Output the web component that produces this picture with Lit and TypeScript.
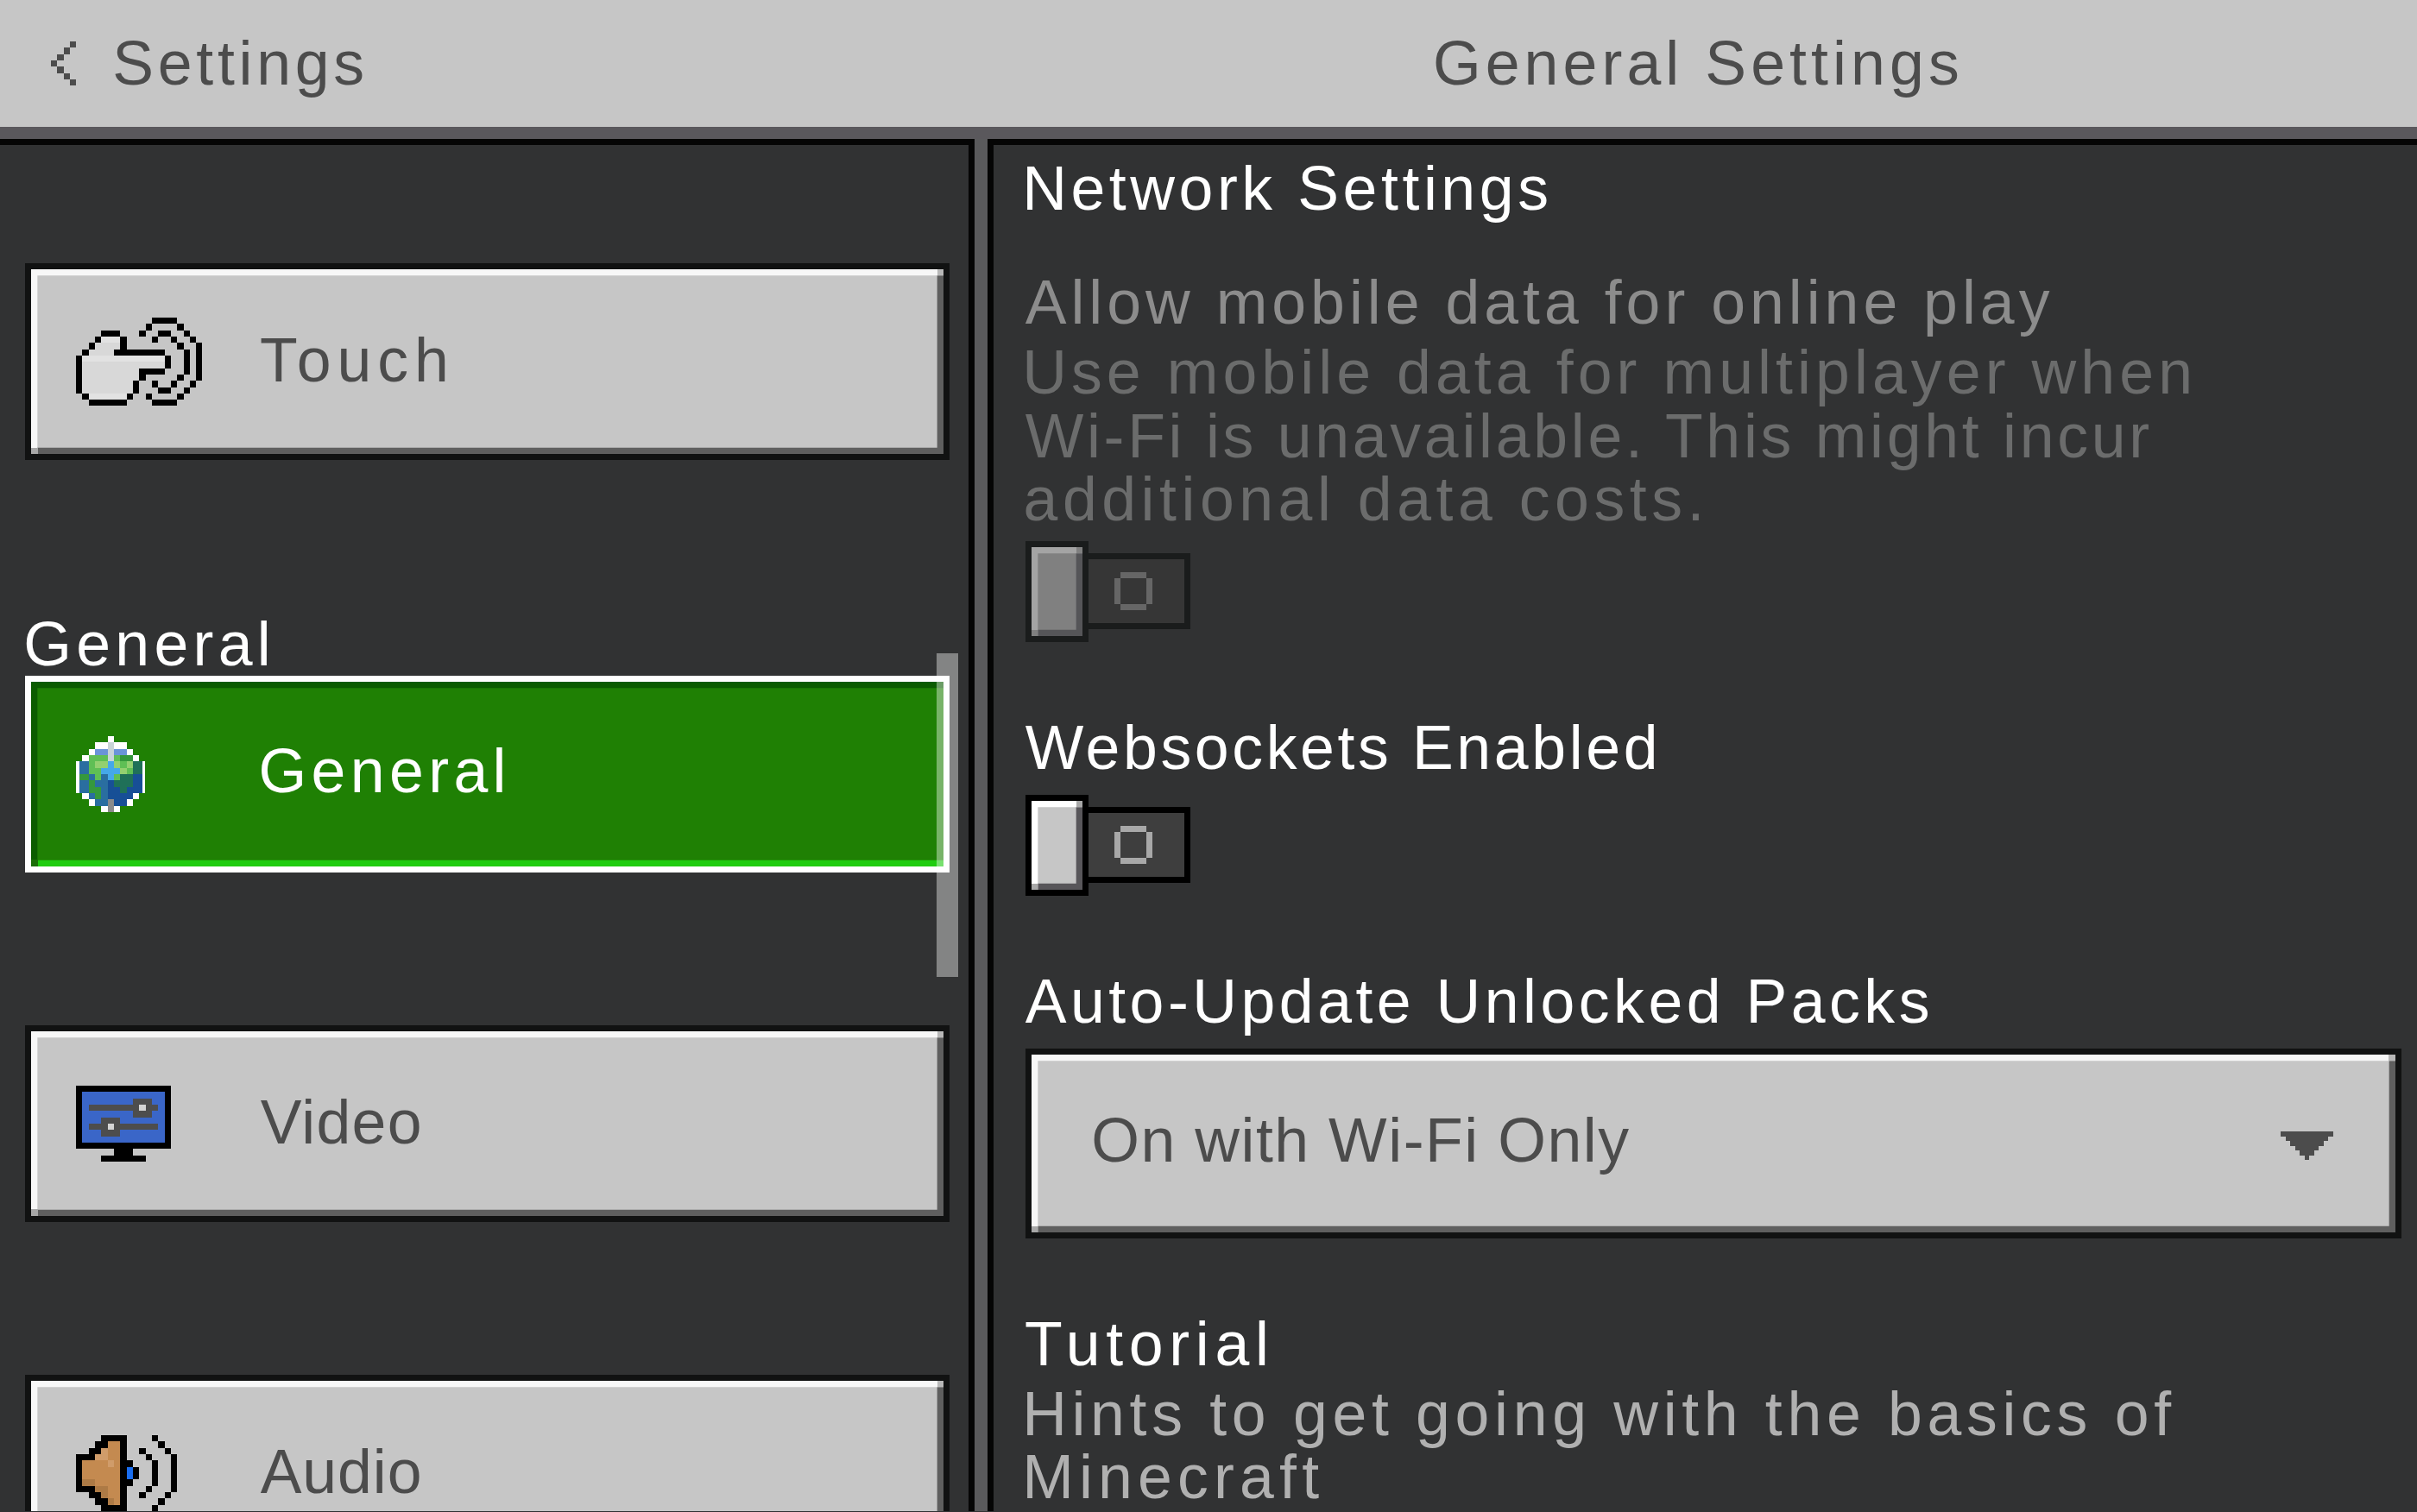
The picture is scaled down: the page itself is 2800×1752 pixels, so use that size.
import { LitElement, html, css, svg } from "lit";
import { customElement } from "lit/decorators.js";

const U = 7.3333;
const FONT_SIZE = 71.6;
const ctx = document.createElement("canvas").getContext("2d")!;

function pix(rows: string[], pal: Record<string, string>, pw = U, ph = U) {
  const w = rows[0].length * pw;
  const h = rows.length * ph;
  const rects: unknown[] = [];
  rows.forEach((row, y) => {
    let x = 0;
    while (x < row.length) {
      let e = x;
      while (e < row.length && row[e] === row[x]) e++;
      const fill = pal[row[x]];
      if (fill) {
        rects.push(svg`<rect x=${x * pw} y=${y * ph} width=${(e - x) * pw} height=${ph} fill=${fill}></rect>`);
      }
      x = e;
    }
  });
  return html`<svg class="pix" width=${w} height=${h} viewBox="0 0 ${w} ${h}" shape-rendering="crispEdges">${rects}</svg>`;
}

const HAND = [
  "............####....",
  "...........#....#...",
  "....###...#..##..#..",
  "...#hhh#....#..#..#.",
  "..#ffff#........#..#",
  ".#ffff########...#.#",
  "#hhhhhhhhhhhhh#..#.#",
  "#fffffffffffff#..#.#",
  "#fffffffff####...#.#",
  "#fffffffff#.....#..#",
  "#ffffffff#..#..#..#.",
  "#ffffffff#...##..#..",
  ".#hhhhhh#..#....#...",
  "..######....####....",
];
const GLOBE = [
  ".....W.....",
  "...WWCWW...",
  "..WPPCPPW..",
  ".WGGGCGDDW.",
  "WBGLLSLGLTW",
  "WBGGSSSLGTW",
  "WDBGBSGTTNW",
  "WBDBBNTTTNW",
  "WBDDBNNTNNW",
  ".WBDBNNNNW.",
  "..WBBXNNW..",
  "....WXW....",
];
const expandGlobe = GLOBE.map((r, i) => {
  const d = r.split("").map((c) => c + c).join("");
  if (i >= 4 && i <= 8) return d[0] + r[1] + d.slice(2, -2) + r[9] + d[d.length - 1];
  return d;
});
const MONITOR = [
  "###############",
  "#bbbbbbbbbbbbb#",
  "#bbbbbbbbgggbb#",
  "#bggggggggLggb#",
  "#bbbbbbbbgggbb#",
  "#bbbgggbbbbbbb#",
  "#bgggLgggggggb#",
  "#bbbgggbbbbbbb#",
  "#bbbbbbbbbbbbb#",
  "###############",
  "......###......",
  "....#######....",
];
const AUDIO = [
  "....####....#...",
  "...##ff#.....#..",
  "..##lff#..#...#.",
  "###llff#...#...#",
  "#fffflf##...#..#",
  "#ffffff#b#..#..#",
  "#ffffff#b#..#..#",
  "#ddffff##...#..#",
  "###ddff#...#...#",
  "..##dff#..#...#.",
  "...##df#.....#..",
  "....####....#...",
];
const CHEVRON = ["...#", "..#.", ".#..", "#...", ".#..", "..#.", "...#"];
const RING = [".####.", "#....#", "#....#", "#....#", "#....#", ".####."];
const ARROW = [
  "###########",
  ".#########.",
  "..#######..",
  "...#####...",
  "....###....",
  ".....#.....",
];

const handPal = { "#": "#000", f: "#d8d8d8", h: "#e2e2e2" };
const globePal = {
  W: "#ffffff", C: "#c8d4d8", P: "#6a94d8", G: "#5fbf55", L: "#93d070", D: "#35983c",
  B: "#2a6ea0", N: "#174f96", T: "#1f7058", S: "#45a8e8", X: "#8a8a8a",
};
const monitorPal = { "#": "#000", b: "#3a66c8", g: "#4d4d4d", L: "#d4d4d4" };
const audioPal = { "#": "#000", f: "#c48a50", l: "#d09c6a", d: "#ad7a45", b: "#1a6ef0" };

@customElement("app-root")
export class AppRoot extends LitElement {
  static styles = css`
    :host {
      display: block;
      width: 2800px;
      height: 1752px;
      overflow: hidden;
      background: #313233;
      font-family: "Liberation Sans", Arial, sans-serif;
      font-size: 71.6px;
      line-height: 73.33px;
    }
    .pix { display: block; flex: none; }
    .t { display: block; white-space: pre; }
    .header {
      height: 146.67px;
      line-height: 146.67px;
      background: #c6c6c6;
      border-bottom: 14.67px solid #5a585c;
      color: #4c4c4c;
      display: flex;
      align-items: center;
    }
    .back {
      width: 1151.33px;
      padding-left: 59px;
      box-sizing: border-box;
      display: flex;
      align-items: center;
      gap: 44px;
      flex: none;
    }
    .title { margin-left: 510.67px; }
    .main { display: flex; height: 1590.67px; }
    .left {
      width: 1129.33px;
      box-sizing: border-box;
      flex: none;
      border-top: 7.33px solid #050505;
      border-right: 7.33px solid #050505;
      padding: 137.5px 0 0 29.33px;
      position: relative;
      overflow: hidden;
    }
    .gutter { width: 14.67px; flex: none; background: #5a5a5c; }
    .right {
      flex: 1;
      box-sizing: border-box;
      border-top: 7.33px solid #050505;
      border-left: 7.33px solid #050505;
      padding: 14.2px 17.67px 0 36.67px;
      color: #fff;
      overflow: hidden;
    }
    .bevel {
      position: relative;
      box-sizing: border-box;
      border: 7.33px solid #111212;
      background: #c6c6c6;
      box-shadow: inset 7.33px 7.33px 0 #f7f7f7, inset -7.33px -7.33px 0 #5f5f5f;
    }
    .bevel::before, .bevel::after {
      content: "";
      position: absolute;
      width: 7.33px;
      height: 7.33px;
    }
    .bevel::before { top: 0; right: 0; background: #b8b8b8; }
    .bevel::after { bottom: 0; left: 0; background: #a8a8a8; }
    .btn {
      width: 1070.67px;
      height: 228px;
      margin-bottom: 177px;
      display: flex;
      align-items: center;
      padding-left: 51.33px;
      color: #4c4c4c;
    }
    .slot { width: 214px; flex: none; display: flex; }
    .btn .t { margin-bottom: 3px; }
    .btn.sel {
      border-color: #fff;
      background: #1f8004;
      box-shadow: inset 0 -7.33px 0 #1fcc0f, inset 7.33px 7.33px 0 #0b5c00;
      color: #fff;
    }
    .btn.sel::before { background: #0b5c00; }
    .btn.sel::after { background: #1a6d08; }
    .btn.sel .t { margin-bottom: 6px; }
    .heading { color: #fff; margin-top: -1.5px; margin-bottom: -0.8px; }
    .touch { margin-bottom: 178.5px; }
    .thumbbar {
      position: absolute;
      left: 1085px;
      top: 589.33px;
      width: 25px;
      height: 375px;
      background: rgba(255, 255, 255, 0.4);
    }
    .section { margin-top: 85.6px; }
    .first { margin-top: 59px; }
    .sub { margin-top: 7.7px; }
    .muted { color: #8c8c8c; }
    .faint { color: #6b6c6c; }
    .desc { color: #b0b0b0; }
    .toggle { display: flex; align-items: center; margin-top: 17.7px; }
    .toggle.off { margin-top: 11.5px; }
    .knob {
      width: 73.67px;
      height: 117.33px;
      flex: none;
      border-color: #000;
      background: #c6c6c6;
      box-shadow: inset 7.33px 7.33px 0 #fff, inset -7.33px -7.33px 0 #58565a;
    }
    .knob::before { background: #a8a8a8; }
    .knob::after { background: #a8a8a8; }
    .track {
      width: 117.33px;
      height: 88px;
      box-sizing: border-box;
      flex: none;
      border: 7.33px solid #000;
      border-left: none;
      background: #3e3e3e;
      padding-left: 29.33px;
      display: flex;
      align-items: center;
    }
    .off .knob {
      border-color: #1a1c1c;
      background: #808080;
      box-shadow: inset 7.33px 7.33px 0 #a4a4a4, inset -7.33px -7.33px 0 #555558;
    }
    .off .knob::before, .off .knob::after { background: #808080; }
    .off .track { border-color: #1a1c1c; background: #363636; }
    .dropdown {
      width: 1594px;
      height: 220px;
      margin-top: 18.2px;
      display: flex;
      align-items: center;
      justify-content: space-between;
      padding: 0 72px 0 71.67px;
      color: #4c4c4c;
    }
    .dropdown .t { margin-bottom: 6px; }
    .dropdown .pix { margin-top: 4px; }
  `;

  /** Real text, stretched so that its ink spans the given width in the reference. */
  private t(text: string, width: number, cls = "") {
    ctx.font = `${FONT_SIZE}px "Liberation Sans"`;
    const m = ctx.measureText(text);
    const ink = m.actualBoundingBoxLeft + m.actualBoundingBoxRight;
    const spacing = (width - ink) / (text.length - 1);
    const shift = m.actualBoundingBoxLeft * 0.7;
    return html`<span class="t ${cls}" style="letter-spacing:${spacing.toFixed(3)}px;margin-left:${shift.toFixed(2)}px">${text}</span>`;
  }

  render() {
    return html`
      <div class="header">
        <div class="back">${pix(CHEVRON, { "#": "#4c4c4c" })}${this.t("Settings", 287)}</div>
        <div class="title">${this.t("General Settings", 605)}</div>
      </div>
      <div class="main">
        <div class="left">
          <div class="bevel btn touch">
            <span class="slot">${pix(HAND, handPal)}</span>${this.t("Touch", 214)}
          </div>
          <div class="heading">${this.t("General", 279.5)}</div>
          <div class="bevel btn sel">
            <span class="slot">${pix(expandGlobe, globePal, U / 2, U)}</span>${this.t("General", 280)}
          </div>
          <div class="bevel btn">
            <span class="slot">${pix(MONITOR, monitorPal)}</span>${this.t("Video", 184)}
          </div>
          <div class="bevel btn">
            <span class="slot">${pix(AUDIO, audioPal)}</span>${this.t("Audio", 184)}
          </div>
          <div class="thumbbar"></div>
        </div>
        <div class="gutter"></div>
        <div class="right">
          ${this.t("Network Settings", 603)}
          <div class="first">${this.t("Allow mobile data for online play", 1187, "muted")}</div>
          <div class="sub faint">
            ${this.t("Use mobile data for multiplayer when", 1347)}
            ${this.t("Wi-Fi is unavailable. This might incur", 1303)}
            ${this.t("additional data costs.", 780)}
          </div>
          <div class="toggle off">
            <div class="bevel knob"></div>
            <div class="track">${pix(RING, { "#": "#666666" })}</div>
          </div>
          <div class="section">${this.t("Websockets Enabled", 729)}</div>
          <div class="toggle">
            <div class="bevel knob"></div>
            <div class="track">${pix(RING, { "#": "#a8a8a8" })}</div>
          </div>
          <div class="section">${this.t("Auto-Update Unlocked Packs", 1046)}</div>
          <div class="bevel dropdown">
            ${this.t("On with Wi-Fi Only", 620)}
            ${pix(ARROW, { "#": "#4c4c4c" }, 5.5, 5.5)}
          </div>
          <div class="section">${this.t("Tutorial", 278)}</div>
          <div class="sub desc">
            ${this.t("Hints to get going with the basics of", 1326)}
            ${this.t("Minecraft", 339)}
          </div>
        </div>
      </div>
    `;
  }
}
